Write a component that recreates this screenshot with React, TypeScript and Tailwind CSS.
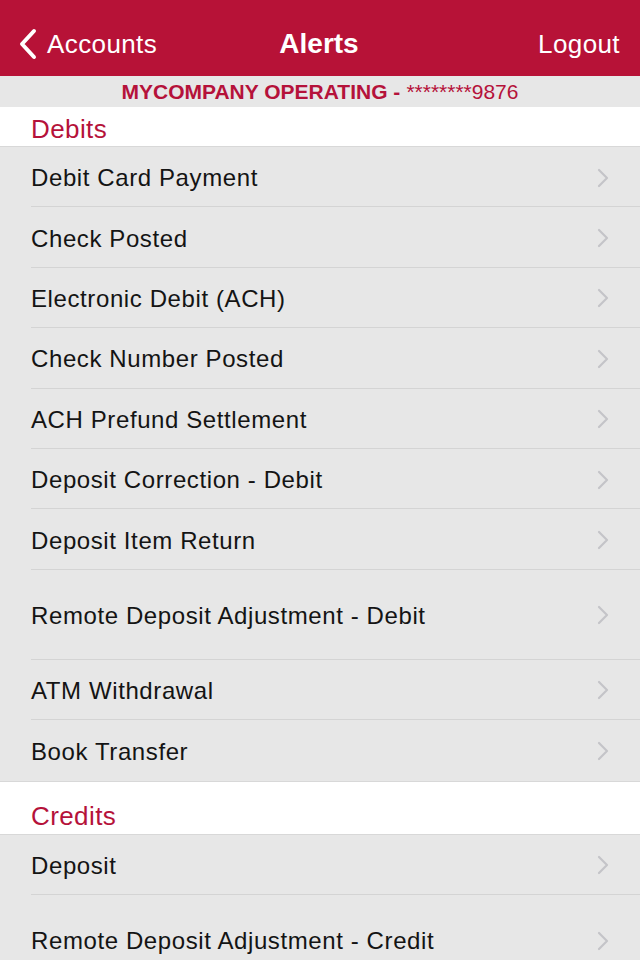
const font = { fontFamily: '"Liberation Sans", Arial, sans-serif' };

type Item = { label: string; tall?: boolean };

const debits: Item[] = [
  { label: "Debit Card Payment" },
  { label: "Check Posted" },
  { label: "Electronic Debit (ACH)" },
  { label: "Check Number Posted" },
  { label: "ACH Prefund Settlement" },
  { label: "Deposit Correction - Debit" },
  { label: "Deposit Item Return" },
  { label: "Remote Deposit Adjustment - Debit", tall: true },
  { label: "ATM Withdrawal" },
  { label: "Book Transfer" },
];

const credits: Item[] = [
  { label: "Deposit" },
  { label: "Remote Deposit Adjustment - Credit", tall: true },
];

function Chevron() {
  return (
    <svg width="12" height="20" viewBox="0 0 12 20" className="shrink-0 mt-[2px]">
      <path d="M2 2 L10 10 L2 18" fill="none" stroke="#c4c4c8" strokeWidth="2.2" strokeLinecap="round" strokeLinejoin="round" />
    </svg>
  );
}

function Row({ item, last }: { item: Item; last: boolean }) {
  return (
    <div className="pl-[31px]">
      <div
        className={`flex items-center justify-between pr-[31px] ${item.tall ? "h-[90px]" : "h-[60.4px]"} ${
          last ? "" : "border-b border-[#d4d4d4]"
        }`}
      >
        <span className="pt-[3px] text-[24px] tracking-[0.6px] text-[#141414]">{item.label}</span>
        <Chevron />
      </div>
    </div>
  );
}

function Section({ title, items, first }: { title: string; items: Item[]; first?: boolean }) {
  return (
    <section>
      <div
        className={`bg-white px-[31px] flex items-end border-b border-[#d8d8d8] ${
          first ? "h-[40px] pb-[4px]" : "h-[54px] pb-[5px] border-t"
        }`}
      >
        <h2 className="text-[26px] tracking-[0.4px] text-[#b5123a] leading-none">{title}</h2>
      </div>
      {items.map((item, i) => (
        <Row key={item.label} item={item} last={i === items.length - 1} />
      ))}
    </section>
  );
}

export default function App() {
  return (
    <div className="w-[640px] h-[960px] overflow-hidden bg-[#e7e7e7]" style={font}>
      {/* Nav bar */}
      <header className="bg-[#b71237] h-[76px]">
        <div className="flex items-center h-full pt-[12px] pl-[18px] pr-[20px]">
          <div className="flex items-center gap-[9px] w-[200px]">
            <svg width="20" height="32" viewBox="0 0 20 32">
              <path d="M16 3 L4 16 L16 29" fill="none" stroke="white" strokeWidth="4" strokeLinecap="round" strokeLinejoin="round" />
            </svg>
            <span className="text-white text-[26px] tracking-[0.4px]">Accounts</span>
          </div>
          <div className="flex-1 text-center text-white text-[28px] font-bold">Alerts</div>
          <div className="w-[200px] text-right text-white text-[26px] tracking-[0.4px]">Logout</div>
        </div>
      </header>

      {/* Account bar */}
      <div className="h-[31px] flex items-center justify-center text-[#b5123a] text-[21px] font-bold leading-none">
        MYCOMPANY OPERATING -<span className="ml-[6px] font-normal">********9876</span>
      </div>

      <Section title="Debits" items={debits} first />
      <Section title="Credits" items={credits} />
    </div>
  );
}
